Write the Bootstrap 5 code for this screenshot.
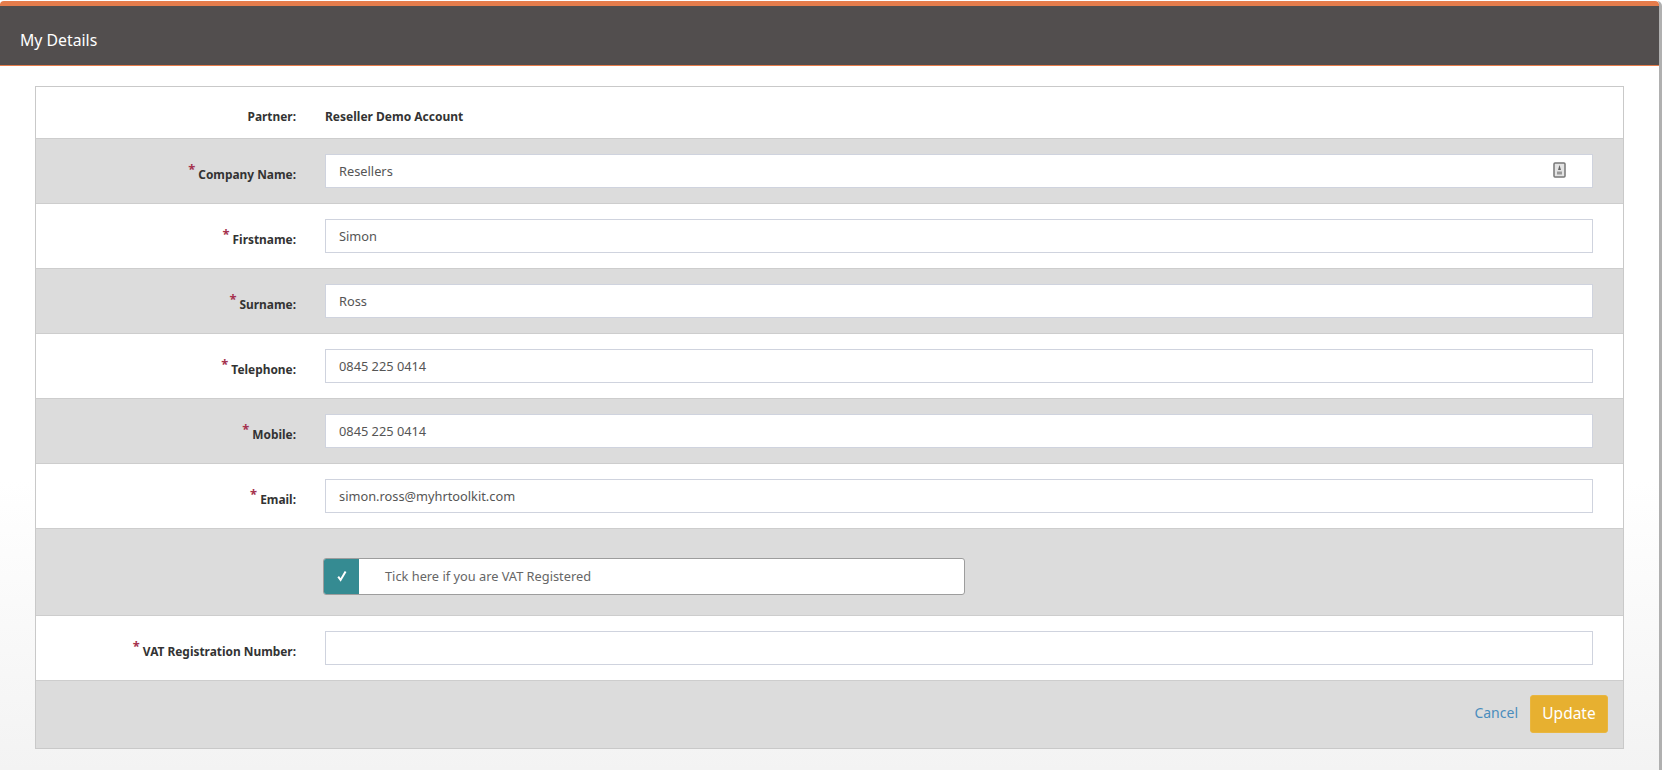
<!DOCTYPE html>
<html lang="en"><head><meta charset="utf-8"><title>My Details</title>
<link href="https://cdn.jsdelivr.net/npm/bootstrap@5.3.0/dist/css/bootstrap.min.css" rel="stylesheet">
<style>
html,body{height:770px;overflow:hidden;background:#fff}
body{font-family:"Noto Sans","Open Sans",sans-serif;font-size:13px;color:#333}
.shell{width:1659px;height:769px;margin-top:1px;border-right:3px solid #b0b0b0;border-bottom:1px solid #b0b0b0;border-radius:0 5px 0 0;background:linear-gradient(#fff 0,#fff 480px,#f3f3f3 100%);box-sizing:content-box}
.headbar{height:65px;background:#524e4e;border-top:5px solid #e57c4b;border-bottom:1px solid #e57c4b;border-radius:4px 4px 0 0;color:#fff;font-size:15.8px;padding-left:20px;padding-top:11px}
.formbox{margin:20px 35px 0 35px;border:1px solid #c9c9c9;background:#fff}
.fline{height:65px;border-bottom:1px solid #cdcdcd}
.fline.first{height:52px;padding-top:8px}
.fline.tall{height:87px}
.fline.alt{background:#dcdcdc}
.fline.foot{height:67px;border-bottom:0;background:#dcdcdc;padding-right:15px}
.lab{width:260px;text-align:right;font-weight:700;font-size:11.9px;color:#333;flex:none;padding-top:8px}
.fline.first .lab{padding-top:0}
.req{color:#a5324e;font-size:13px;line-height:1;position:relative;top:-5px}
.val{margin-left:29px;font-weight:700;font-size:12px;color:#333}
.inbox{margin-left:29px;margin-right:30px;flex:1 1 auto;height:34px;border:1px solid #cfd3de;background:#fff;border-radius:0;color:#555;font-size:12.8px;padding:0 13px;box-shadow:none;font-family:inherit}
.inwrap{margin-left:29px;margin-right:30px;flex:1 1 auto}
.inwrap .inbox{margin:0;width:100%;display:block}
.cardicon{position:absolute;right:27px;top:8px}
.tick{margin-left:27px;margin-top:8px;width:642px;height:37px;border:1px solid #9d9d9d;border-radius:3px;background:#fff;overflow:hidden;color:#666}
.tickbox{width:35px;background:#358b92;color:#fff}
.ticktxt{padding-left:26px;padding-top:2px;font-size:12.8px}
.cancelink{color:#4a8dbd;font-size:14px;text-decoration:none;margin-right:12px;padding-bottom:4px}
.updbtn{background:#e7b030;border:1px solid #e9b63f;color:#fff;font-size:15.5px;width:78px;height:38px;padding:0;border-radius:3px;margin-bottom:2px}
</style></head>
<body>
<div class="shell">
  <div class="headbar d-flex align-items-center">My Details</div>
  <div class="formbox">
    <div class="fline first d-flex align-items-center"><div class="lab">Partner:</div><div class="val">Reseller Demo Account</div></div>
    <div class="fline alt d-flex align-items-center"><div class="lab"><span class="req">*</span> Company Name:</div>
      <div class="inwrap position-relative"><input class="form-control inbox" value="Resellers">
        <svg class="cardicon" width="13" height="16" viewBox="0 0 13 16"><rect x="1" y="1" width="11" height="14" rx="1" fill="#e4e4e4" stroke="#777" stroke-width="1.5"/><path d="M6.5 3 8 8H5z" fill="#666"/><rect x="4" y="9.5" width="5" height="3" fill="#999"/></svg></div></div>
    <div class="fline d-flex align-items-center"><div class="lab"><span class="req">*</span> Firstname:</div><input class="form-control inbox" value="Simon"></div>
    <div class="fline alt d-flex align-items-center"><div class="lab"><span class="req">*</span> Surname:</div><input class="form-control inbox" value="Ross"></div>
    <div class="fline d-flex align-items-center"><div class="lab"><span class="req">*</span> Telephone:</div><input class="form-control inbox" value="0845 225 0414"></div>
    <div class="fline alt d-flex align-items-center"><div class="lab"><span class="req">*</span> Mobile:</div><input class="form-control inbox" value="0845 225 0414"></div>
    <div class="fline d-flex align-items-center"><div class="lab"><span class="req">*</span> Email:</div><input class="form-control inbox" value="simon.ross@myhrtoolkit.com"></div>
    <div class="fline tall alt d-flex align-items-center"><div class="lab"></div>
      <div class="tick d-flex"><div class="tickbox d-flex align-items-center justify-content-center"><svg width="12" height="12" viewBox="0 0 12 12"><path d="M2.2 6.6 4.6 10 9.6 1.6" fill="none" stroke="#fff" stroke-width="2"/></svg></div><div class="ticktxt d-flex align-items-center">Tick here if you are VAT Registered</div></div></div>
    <div class="fline d-flex align-items-center"><div class="lab"><span class="req">*</span> VAT Registration Number:</div><input class="form-control inbox" value=""></div>
    <div class="fline foot d-flex align-items-center justify-content-end"><a href="#" class="cancelink">Cancel</a><button class="btn updbtn">Update</button></div>
  </div>
</div>
<script src="https://cdn.jsdelivr.net/npm/bootstrap@5.3.0/dist/js/bootstrap.bundle.min.js"></script>
</body></html>
